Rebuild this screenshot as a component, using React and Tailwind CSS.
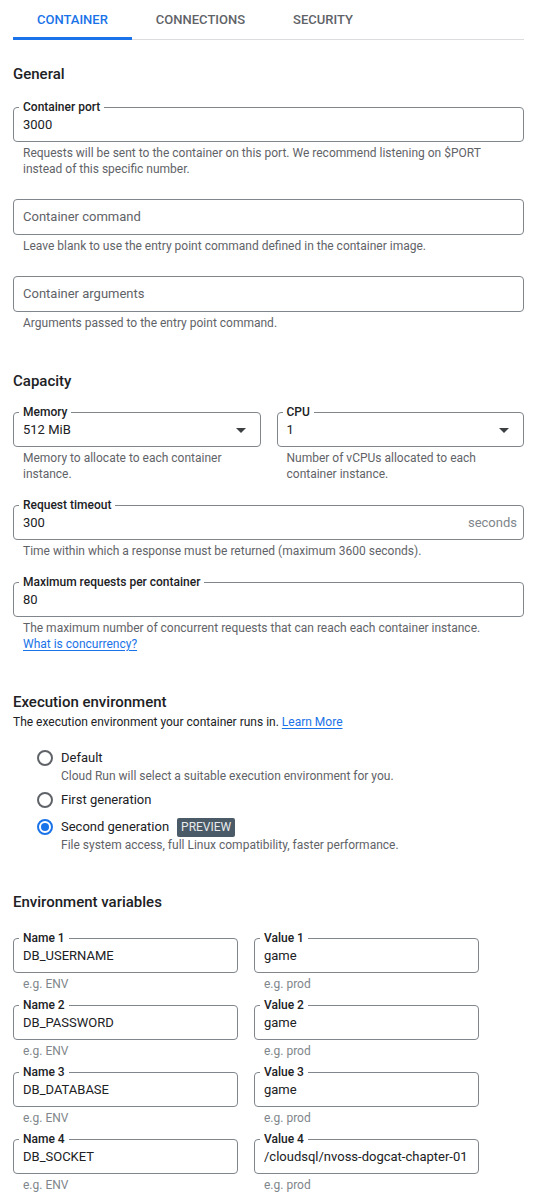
import React from 'react';

const font = { fontFamily: 'Roboto, "Noto Sans", sans-serif' };

const Helper = ({ children, muted }) => (
    <div className={`mt-[3px] px-[10px] text-[12px] leading-[16px] ${muted ? 'text-[#80868b]' : 'text-[#5f6368]'}`}>
        {children}
    </div>
);

const Field = ({ label, value, suffix, select }) => (
    <fieldset className="min-w-0 border border-[#80868b] rounded-[4px] px-[9px] pb-[6px]">
        <legend className="ml-[-4px] px-[4px] text-[12px] leading-[14px] font-medium text-[#202124]">{label}</legend>
        <div className="mt-[1px] h-[20px] flex items-center text-[13px] text-[#202124]">
            <span className="flex-1 truncate">{value}</span>
            {suffix && <span className="text-[#80868b] mr-[-3px]">{suffix}</span>}
            {select && (
                <svg width="10" height="5" viewBox="0 0 10 5" className="mr-[5px]">
                    <path d="M0 0h10L5 5z" fill="#3c4043" />
                </svg>
            )}
        </div>
    </fieldset>
);

const EmptyField = ({ placeholder }) => (
    <div className="h-[36px] border border-[#80868b] rounded-[4px] px-[9px] flex items-center text-[13px] text-[#5f6368]">
        {placeholder}
    </div>
);

const Heading = ({ children, className = '' }) => (
    <h2 className={`text-[15px] leading-[24px] font-medium text-[#202124] ${className}`}>{children}</h2>
);

const Radio = ({ checked }) => (
    <div className={`w-[16px] h-[16px] rounded-full border-2 flex items-center justify-center ${checked ? 'border-[#1a73e8]' : 'border-[#5f6368]'}`}>
        {checked && <div className="w-[8px] h-[8px] rounded-full bg-[#1a73e8]"></div>}
    </div>
);

const RadioOption = ({ label, helper, checked, badge, className = '' }) => (
    <div className={`flex items-start ${className}`}>
        <div className="w-[24px] h-[20px] flex items-center">
            <Radio checked={checked} />
        </div>
        <div>
            <div className="h-[20px] flex items-center text-[13px] text-[#202124]">
                {label}
                {badge && (
                    <span className="ml-[8px] h-[19px] px-[4px] flex items-center rounded-[2px] bg-[#4a5a66] text-[12px] text-[#e8eaed]">
                        {badge}
                    </span>
                )}
            </div>
            {helper && <div className="text-[12px] leading-[16px] text-[#5f6368]">{helper}</div>}
        </div>
    </div>
);

const envVars = [
    { name: 'DB_USERNAME', value: 'game' },
    { name: 'DB_PASSWORD', value: 'game' },
    { name: 'DB_DATABASE', value: 'game' },
    { name: 'DB_SOCKET', value: '/cloudsql/nvoss-dogcat-chapter-01' },
];

const tabs = ['CONTAINER', 'CONNECTIONS', 'SECURITY'];

const App = () => {
    return (
        <div className="bg-white min-h-[1198px] pl-[13px] pr-[21px]" style={font}>
            {/* Tabs */}
            <div className="flex border-b border-[#dadce0]">
                {tabs.map((t, i) => (
                    <div
                        key={t}
                        className={`h-[40px] px-[24px] flex items-center text-[13px] font-medium -mb-px border-b-[3px] ${i === 0 ? 'text-[#1a73e8] border-[#1a73e8]' : 'text-[#5f6368] border-transparent'}`}
                    >
                        <span className="mt-[3px]">{t}</span>
                    </div>
                ))}
            </div>

            {/* General */}
            <Heading className="mt-[22px]">General</Heading>
            <div className="mt-[14px]">
                <Field label="Container port" value="3000" />
                <Helper>Requests will be sent to the container on this port. We recommend listening on $PORT instead of this specific number.</Helper>
            </div>
            <div className="mt-[22px]">
                <EmptyField placeholder="Container command" />
                <Helper>Leave blank to use the entry point command defined in the container image.</Helper>
            </div>
            <div className="mt-[22px]">
                <EmptyField placeholder="Container arguments" />
                <Helper>Arguments passed to the entry point command.</Helper>
            </div>

            {/* Capacity */}
            <Heading className="mt-[38px]">Capacity</Heading>
            <div className="mt-[12px] grid grid-cols-2 gap-x-[16px]">
                <div>
                    <Field label="Memory" value="512 MiB" select />
                    <Helper>Memory to allocate to each container instance.</Helper>
                </div>
                <div>
                    <Field label="CPU" value="1" select />
                    <Helper>Number of vCPUs allocated to each container instance.</Helper>
                </div>
            </div>
            <div className="mt-[16px]">
                <Field label="Request timeout" value="300" suffix="seconds" />
                <Helper>Time within which a response must be returned (maximum 3600 seconds).</Helper>
            </div>
            <div className="mt-[16px]">
                <Field label="Maximum requests per container" value="80" />
                <Helper>
                    The maximum number of concurrent requests that can reach each container instance.
                    <br />
                    <a href="#" className="text-[#1a73e8] underline underline-offset-2">What is concurrency?</a>
                </Helper>
            </div>

            {/* Execution environment */}
            <Heading className="mt-[38px] leading-[20px]">Execution environment</Heading>
            <div className="text-[12px] leading-[16px] text-[#202124]">
                The execution environment your container runs in.{' '}
                <a href="#" className="text-[#1a73e8] underline underline-offset-2">Learn More</a>
            </div>
            <div className="mt-[18px] pl-[24px]">
                <RadioOption label="Default" helper="Cloud Run will select a suitable execution environment for you." />
                <RadioOption className="mt-[6px]" label="First generation" />
                <RadioOption className="mt-[7px]" label="Second generation" badge="PREVIEW" checked helper="File system access, full Linux compatibility, faster performance." />
            </div>

            {/* Environment variables */}
            <Heading className="mt-[37px]">Environment variables</Heading>
            <div className="mt-[17px] w-[466px] grid grid-cols-2 gap-x-[16px] gap-y-[6px]">
                {envVars.map((v, i) => (
                    <React.Fragment key={v.name}>
                        <div>
                            <Field label={`Name ${i + 1}`} value={v.name} />
                            <Helper muted>e.g. ENV</Helper>
                        </div>
                        <div>
                            <Field label={`Value ${i + 1}`} value={v.value} />
                            <Helper muted>e.g. prod</Helper>
                        </div>
                    </React.Fragment>
                ))}
            </div>
        </div>
    );
};

export default App;
